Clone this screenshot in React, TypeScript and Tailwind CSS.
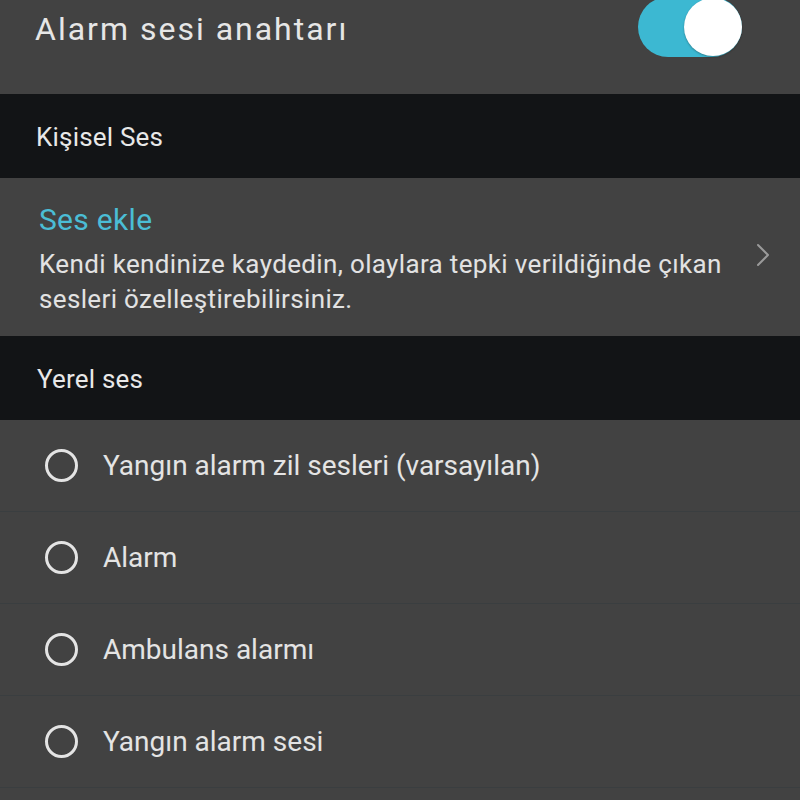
import { ChevronRight } from 'lucide-react'

const sounds = [
  'Yangın alarm zil sesleri (varsayılan)',
  'Alarm',
  'Ambulans alarmı',
  'Yangın alarm sesi',
]

function Toggle() {
  return (
    <div className="-mt-[3px] mr-[58px] flex h-[60px] w-[104px] items-center justify-end rounded-full bg-[#3cb8d2]">
      <div className="h-[58px] w-[58px] rounded-full bg-white shadow-[0_1px_2px_rgba(0,0,0,0.3)]" />
    </div>
  )
}

function Radio({ label }: { label: string }) {
  return (
    <div className="flex h-[92px] items-center border-b border-[#3a3e40] pl-[45px]">
      <div className="h-[33px] w-[33px] rounded-full border-[3px] border-[#e4e4e4]" />
      <span className="ml-[25px] text-[28px] tracking-[0px] text-[#e4e4e4]">{label}</span>
    </div>
  )
}

export default function App() {
  return (
    <div className="h-[800px] w-[800px] overflow-hidden bg-[#424242] font-['Roboto',sans-serif]">
      {/* master switch */}
      <div className="flex h-[94px] items-start justify-between">
        <span className="mt-[13px] pl-[35px] text-[32px] leading-none tracking-[2px] text-[#e6e6e6]">
          Alarm sesi anahtarı
        </span>
        <Toggle />
      </div>

      <div className="flex h-[84px] items-center bg-[#121416] pl-[36px] pt-[3px] text-[26px] tracking-[0.2px] text-[#e8e8e8]">
        Kişisel Ses
      </div>

      {/* custom sound */}
      <div className="flex h-[158px] items-center justify-between pl-[39px] pr-[17px] pt-[10px]">
        <div className="flex flex-col">
          <span className="-mt-[2px] text-[30px] leading-none tracking-[0.3px] text-[#4bbdd5]">Ses ekle</span>
          <p className="mt-[12px] text-[26px] leading-[35px] tracking-[0.35px] text-[#e2e2e2]">
            Kendi kendinize kaydedin, olaylara tepki verildiğinde çıkan
            <br />
            sesleri özelleştirebilirsiniz.
          </p>
        </div>
        <ChevronRight className="-mt-[14px] h-[40px] w-[40px] text-[#9a9a9a]" strokeWidth={1.2} />
      </div>

      <div className="flex h-[84px] items-center bg-[#121416] pl-[37px] pt-[3px] text-[26px] tracking-[0.2px] text-[#e8e8e8]">
        Yerel ses
      </div>

      {/* local sounds */}
      <div className="flex flex-col">
        {sounds.map((s) => (
          <Radio key={s} label={s} />
        ))}
      </div>
    </div>
  )
}
